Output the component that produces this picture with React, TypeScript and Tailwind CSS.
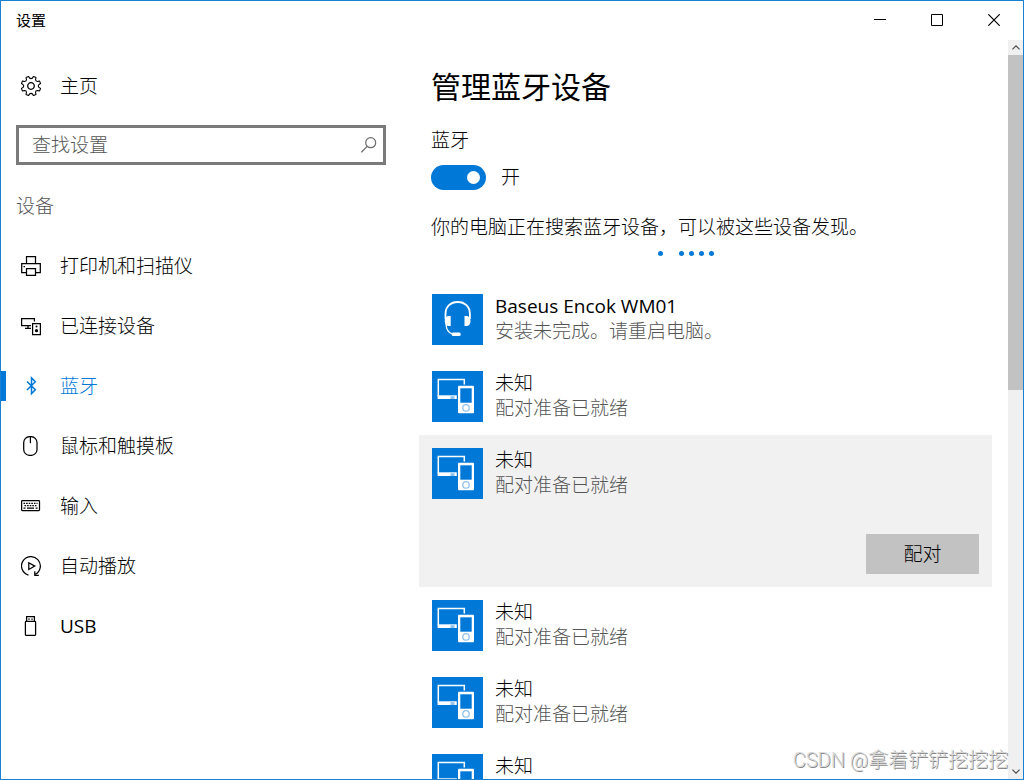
import { useState, type ReactNode } from 'react';

type NavItem = { id: string; label: string; icon: ReactNode };
type Device = { id: number; name: string; status: string; kind: 'headset' | 'unknown' };

function NavIcon({ children, viewBox = '0 0 20 20' }: { children: ReactNode; viewBox?: string }) {
  return (
    <svg className="size-5 shrink-0" viewBox={viewBox} fill="none" stroke="currentColor" strokeWidth="1.25" aria-hidden="true">
      {children}
    </svg>
  );
}

const gearIcon = (
  <NavIcon viewBox="-10 -10 20 20">
    <path
      strokeLinejoin="round"
      strokeWidth="1.1"
      d="M9.5 2.6L8.6 4.9Q7.4 5 6.4 4.500Q4.500 4.500 4.500 6.400Q5 7.400 4.900 8.600L2.600 9.500Q1.800 9 1.500 8Q0 6.700 -1.500 8Q-1.800 9 -2.600 9.500L-4.900 8.600Q-5 7.400 -4.500 6.400Q-4.500 4.500 -6.400 4.500Q-7.400 5 -8.600 4.900L-9.500 2.600Q-9 1.800 -8 1.500Q-6.700 0 -8 -1.500Q-9 -1.800 -9.500 -2.600L-8.600 -4.900Q-7.400 -5 -6.400 -4.500Q-4.500 -4.500 -4.500 -6.400Q-5 -7.400 -4.900 -8.600L-2.600 -9.500Q-1.800 -9 -1.500 -8Q0 -6.700 1.500 -8Q1.800 -9 2.600 -9.500L4.900 -8.600Q5 -7.400 4.500 -6.400Q4.500 -4.500 6.400 -4.500Q7.400 -5 8.600 -4.900L9.500 -2.600Q9 -1.800 8 -1.500Q6.700 0 8 1.500Q9 1.800 9.500 2.600Z"
    />
    <circle r="3.3" />
  </NavIcon>
);

const navItems: NavItem[] = [
  {
    id: 'printers',
    label: '打印机和扫描仪',
    icon: (
      <NavIcon>
        <path d="M5.5 7.5V.7h9v6.8M5.5 16.5H.7v-9h18.6v9h-4.8" />
        <path d="M5.5 12.5h9v6.8h-9z" />
        <path d="M2.5 10.5h1.5" />
      </NavIcon>
    ),
  },
  {
    id: 'connected',
    label: '已连接设备',
    icon: (
      <NavIcon>
        <path d="M10 9.5H.6V2.5h12.8v3M7 9.5v2.5M4 12.3h6" />
        <path d="M11.6 7.5h7.8v11h-7.8z" />
        <circle cx="15.5" cy="10.6" r="1" fill="currentColor" stroke="none" />
        <circle cx="15.5" cy="14.7" r="1.6" fill="currentColor" stroke="none" />
      </NavIcon>
    ),
  },
  {
    id: 'bluetooth',
    label: '蓝牙',
    icon: (
      <NavIcon>
        <path d="M6 5.5l8.3 8.3-3.8 3.8V1.9l3.8 3.8L6 14" strokeWidth="1.5" />
      </NavIcon>
    ),
  },
  {
    id: 'mouse',
    label: '鼠标和触摸板',
    icon: (
      <NavIcon>
        <rect x="2.7" y=".6" width="13.3" height="18.8" rx="6" />
        <path d="M9.4.6v6.6" />
      </NavIcon>
    ),
  },
  {
    id: 'typing',
    label: '输入',
    icon: (
      <NavIcon>
        <rect x=".6" y="4.6" width="17.9" height="10" rx=".8" />
        <path d="M2.5 7.3h14" strokeDasharray="1.6 1" />
        <path d="M3.5 9.6h12.5" strokeDasharray="1.6 1" />
        <path d="M2.5 12.2h2M6 12.2h7M14.6 12.2h2" />
      </NavIcon>
    ),
  },
  {
    id: 'autoplay',
    label: '自动播放',
    icon: (
      <NavIcon>
        <path d="M7.5 19.1A9.4 9.4 0 1 1 14.2 18.4" />
        <path d="M13.8 15.3v4h4" />
        <path d="M7.8 6.7l6 3.4-6 3.4z" />
      </NavIcon>
    ),
  },
  {
    id: 'usb',
    label: 'USB',
    icon: (
      <NavIcon>
        <path d="M5.6 5.4V.6h7.8v4.8" />
        <rect x="4.4" y="5.4" width="10.2" height="14" rx=".8" />
        <path d="M7.3 3h1.4M10.3 3h1.4" />
      </NavIcon>
    ),
  },
];

const devices: Device[] = [
  { id: 1, name: 'Baseus Encok WM01', status: '安装未完成。请重启电脑。', kind: 'headset' },
  { id: 2, name: '未知', status: '配对准备已就绪', kind: 'unknown' },
  { id: 3, name: '未知', status: '配对准备已就绪', kind: 'unknown' },
  { id: 4, name: '未知', status: '配对准备已就绪', kind: 'unknown' },
  { id: 5, name: '未知', status: '配对准备已就绪', kind: 'unknown' },
  { id: 6, name: '未知', status: '配对准备已就绪', kind: 'unknown' },
];

function DeviceIcon({ kind }: { kind: Device['kind'] }) {
  return (
    <svg className="size-[51px] shrink-0 bg-[#0078d7]" viewBox="0 0 51 51" fill="none" aria-hidden="true">
      {kind === 'headset' ? (
        <>
          <path d="M13.500 25V20C13.500 12.500 18.700 8 25.700 8s12.200 4.500 12.200 12v5" stroke="#fff" strokeWidth="1.800" />
          <path d="M18.700 22v10h-2c-2.300 0-4-2-4-5s1.700-5 4-5zM32.500 22v10h2c2.300 0 4-2 4-5s-1.700-5-4-5z" fill="#fff" />
          <path d="M14 30c.3 5 2 9 6.500 10" stroke="#fff" strokeWidth="1.300" />
          <rect x="19.700" y="38.500" width="9" height="3.400" rx="1.500" fill="#fff" />
        </>
      ) : (
        <>
          <path d="M32.300 13.500V8.500H6.300v17" stroke="#fff" strokeWidth="1.500" />
          <path d="M5.600 24.300h19.200V28H5.600z" fill="#fff" />
          <path d="M18.500 25.200h4v2.800h-4z" fill="#8fc3ee" />
          <rect x="26" y="14.700" width="16" height="27.600" rx="1" fill="#fff" />
          <path d="M28.300 17.300h11.400v14.400H28.300z" fill="#0078d7" />
          <circle cx="34" cy="36.900" r="3.200" stroke="#8fc3ee" strokeWidth="1.300" />
        </>
      )}
    </svg>
  );
}

function TitleBar() {
  return (
    <header className="flex h-[39px] shrink-0 items-center justify-between pr-px pl-[15px]">
      <span className="text-[15px] font-normal">设置</span>
      <div className="flex h-full">
        <button aria-label="最小化" className="flex w-[57px] items-center justify-center pb-px">
          <svg className="size-3" viewBox="0 0 12 12" stroke="currentColor"><path d="M0 5.500h12" /></svg>
        </button>
        <button aria-label="最大化" className="flex w-[57px] items-center justify-center pb-px">
          <svg className="size-3" viewBox="0 0 12 12" fill="none" stroke="currentColor"><path d="M.5.5h11v11H.5z" /></svg>
        </button>
        <button aria-label="关闭" className="flex w-[57px] items-center justify-center pb-px">
          <svg className="size-3" viewBox="0 0 12 12" stroke="currentColor" strokeWidth="1.200"><path d="M.3.3l11.400 11.400M11.700.3L.3 11.700" /></svg>
        </button>
      </div>
    </header>
  );
}

function Sidebar() {
  return (
    <aside className="w-[385px] shrink-0 pt-4">
      <a href="#home" className="flex h-15 items-center gap-[19px] pl-5">
        {gearIcon}
        主页
      </a>
      <label className="mt-[9px] ml-[15px] flex h-10 items-center border-3 border-[#7a7a7a] pr-[6px] pl-[13px]">
        <input type="search" aria-label="查找设置" placeholder="查找设置" className="min-w-0 flex-1 outline-none placeholder:text-[#555555]" />
        <svg className="size-4" viewBox="0 0 16 16" fill="none" stroke="#6b6b6b" strokeWidth="1.200" aria-hidden="true">
          <circle cx="9.700" cy="5.700" r="5" />
          <path d="M6.100 9.300L.4 15.300" />
        </svg>
      </label>
      <h2 className="mt-[11px] flex h-15 items-center pl-[15px] text-[#555555]">设备</h2>
      <nav>
        {navItems.map((item) => {
          const active = item.id === 'bluetooth';
          return (
            <a
              key={item.id}
              href={`#${item.id}`}
              aria-current={active ? 'page' : undefined}
              className={`flex h-15 items-center ${active ? 'text-[#0078d7]' : ''}`}
            >
              <span className={`h-[30px] w-[5px] ${active ? 'bg-[#0078d7]' : ''}`} />
              <span className="flex items-center gap-[19px] pl-[15px]">
                {item.icon}
                <span className={item.id === 'usb' ? 'font-normal' : ''}>{item.label}</span>
              </span>
            </a>
          );
        })}
      </nav>
    </aside>
  );
}

function ScrollBar() {
  return (
    <div className="flex w-[15px] shrink-0 flex-col bg-[#f0f0f0] text-[#505050]">
      <button aria-label="向上滚动" className="flex h-[15px] items-center justify-center">
        <svg className="h-[5px] w-2" viewBox="0 0 8 5" fill="none" stroke="currentColor" strokeWidth="1.200"><path d="M.4 4.400L4 .8l3.600 3.600" /></svg>
      </button>
      <div className="flex-1">
        <div className="h-[47.3%] bg-[#c2c2c2]" />
      </div>
      <button aria-label="向下滚动" className="flex h-[15px] items-center justify-center">
        <svg className="h-[5px] w-2" viewBox="0 0 8 5" fill="none" stroke="currentColor" strokeWidth="1.200"><path d="M.4.6L4 4.200 7.600.6" /></svg>
      </button>
    </div>
  );
}

export default function App() {
  const [enabled, setEnabled] = useState(true);
  const [selected, setSelected] = useState(3);

  return (
    <div className="relative flex h-screen flex-col overflow-hidden border border-[#1a80d2] bg-white font-['Open_Sans','Noto_Sans_CJK_SC',sans-serif] text-[19px] leading-[25px] font-light text-black">
      <TitleBar />
      <div className="flex min-h-0 flex-1">
        <Sidebar />
        <main className="min-w-0 flex-1 overflow-hidden pt-[27px] pr-4 pl-[33px]">
          <div className="pl-3">
            <h1 className="text-[30px] leading-10 font-normal">管理蓝牙设备</h1>
            <label htmlFor="bt-toggle" className="mt-[21px] block">蓝牙</label>
            <div className="mt-3 flex items-center gap-[15px]">
              <input
                id="bt-toggle"
                type="checkbox"
                role="switch"
                checked={enabled}
                onChange={(e) => setEnabled(e.target.checked)}
                className="flex h-[25px] w-[55px] appearance-none items-center rounded-full bg-[#999999] px-[6px] before:size-[13px] before:rounded-full before:bg-white checked:justify-end checked:bg-[#0078d7]"
              />
              <span>{enabled ? '开' : '关'}</span>
            </div>
            <p className="mt-[25px]">你的电脑正在搜索蓝牙设备，可以被这些设备发现。</p>
          </div>

          {/* Search progress dots */}
          <div className="mt-[11px] flex justify-center gap-[5px] pr-10">
            <span className="mr-[11px] size-[5px] rounded-full bg-[#0078d7]" />
            <span className="size-[5px] rounded-full bg-[#0078d7]" />
            <span className="size-[5px] rounded-full bg-[#0078d7]" />
            <span className="size-[5px] rounded-full bg-[#0078d7]" />
            <span className="size-[5px] rounded-full bg-[#0078d7]" />
          </div>

          <ul className="mt-[25px]">
            {devices.map((device) => {
              const open = device.id === selected;
              return (
                <li key={device.id} className={`p-[13px] ${open ? 'bg-[#f1f1f1]' : ''}`} onClick={() => setSelected(device.id)}>
                  <div className="flex gap-3">
                    <DeviceIcon kind={device.kind} />
                    <div>
                      <p className={device.kind === 'headset' ? 'font-normal' : ''}>{device.name}</p>
                      <p className="text-[#555555]">{device.status}</p>
                    </div>
                  </div>
                  {open && (
                    <div className="mt-[35px] flex justify-end">
                      <button className="h-10 w-[113px] bg-[#c2c2c2]">配对</button>
                    </div>
                  )}
                </li>
              );
            })}
          </ul>
        </main>
        <ScrollBar />
      </div>
      <span className="pointer-events-none absolute right-[15px] bottom-[5px] font-['Roboto','Noto_Sans_CJK_SC',sans-serif] text-xl text-[#d8d8d8] [text-shadow:1px_1px_0_#8a8a8a]">
        CSDN @拿着铲铲挖挖挖
      </span>
    </div>
  );
}
